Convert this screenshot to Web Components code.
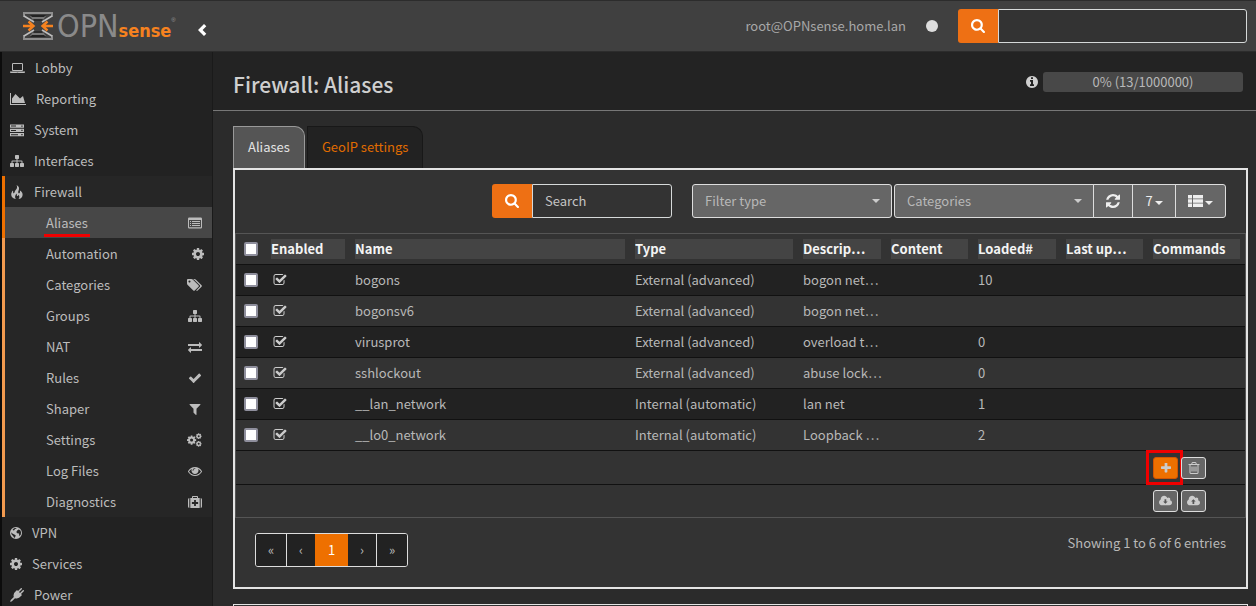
<!DOCTYPE html>
<html lang="en">
<head>
<meta charset="utf-8">
<title>Firewall: Aliases</title>
<style>
html,body{margin:0;height:100%}
body{background:#2b2b2b;color:#b8b8b8;font:13px/20px "Noto Sans CJK SC","Noto Sans",sans-serif;overflow:hidden}
</style>
</head>
<body>
<opn-app></opn-app>
<script>
const COG='<path d="M1152 896q0-106-75-181t-181-75-181 75-75 181 75 181 181 75 181-75 75-181zm512-109v222q0 12-8 23t-20 13l-185 28q-19 54-39 91 35 50 107 138 10 12 10 25t-9 23q-27 37-99 108t-94 71q-12 0-26-9l-138-108q-44 23-91 38-16 136-29 186-7 28-36 28h-222q-14 0-24.5-8.5t-11.5-21.5l-28-184q-49-16-90-37l-141 107q-10 9-25 9-14 0-25-11-126-114-165-168-7-10-7-23 0-12 8-23 15-21 51-66.5t54-70.5q-27-50-41-99l-183-27q-13-2-21-12.5t-8-23.5v-222q0-12 8-23t19-13l186-28q14-46 39-92-40-57-107-138-10-12-10-24 0-10 9-23 26-36 98.5-107.5t94.5-71.5q13 0 26 10l138 107q44-23 91-38 16-136 29-186 7-28 36-28h222q14 0 24.5 8.5t11.5 21.5l28 184q49 16 90 37l142-107q9-9 24-9 13 0 25 10 129 119 165 170 7 8 7 22 0 12-8 23-15 21-51 66.5t-54 70.5q26 50 41 98l183 28q13 2 21 12.5t8 23.5z"/>';
const CLOUD='<path d="M1984 1152q0 159-112.5 271.5t-271.5 112.5h-1088q-185 0-316.5-131.5t-131.5-316.5q0-132 71-241.5t187-163.5q-2-28-2-43 0-212 150-362t362-150q158 0 286.5 88t187.5 230q70-62 166-62 106 0 181 75t75 181q0 75-41 138 129 30 213 134.5t84 239.5z"/>';
/* name: [width, height, viewBox, shapes] */
const ICONS={
laptop:[15,14,'0 0 1920 1792','<path d="M416 1280q-66 0-113-47t-47-113v-704q0-66 47-113t113-47h1088q66 0 113 47t47 113v704q0 66-47 113t-113 47h-1088zm-32-864v704q0 13 9.5 22.5t22.5 9.5h1088q13 0 22.5-9.5t9.5-22.5v-704q0-13-9.5-22.5t-22.5-9.5h-1088q-13 0-22.5 9.5t-9.5 22.5zm1376 928h160v96q0 40-47 68t-113 28h-1600q-66 0-113-28t-47-68v-96h1760zm-720 96q16 0 16-16t-16-16h-160q-16 0-16 16t16 16h160z"/>'],
chart:[16,14,'0 0 2048 1792','<path d="M2048 1536v128h-2048v-1536h128v1408h1920zm-384-1024l256 896h-1664v-576l448-576 576 576z"/>'],
server:[14,14,'0 0 14 14','<path fill-rule="evenodd" d="M0 1.5h14v3.2H0zM0 5.8h14v3.2H0zM0 10.1h14v3.2H0zM1 2.6v1h5v-1zM1 6.9v1h5v-1zM1 11.2v1h7v-1zM11.3 2.5v1.2h1.3V2.5zM11.3 6.8v1.2h1.3V6.8zM11.3 11.1v1.2h1.3v-1.2z"/>'],
sitemap:[14,14,'0 0 1792 1792','<path d="M1792 1248v320q0 40-28 68t-68 28h-320q-40 0-68-28t-28-68v-320q0-40 28-68t68-28h96v-192h-512v192h96q40 0 68 28t28 68v320q0 40-28 68t-68 28h-320q-40 0-68-28t-28-68v-320q0-40 28-68t68-28h96v-192h-512v192h96q40 0 68 28t28 68v320q0 40-28 68t-68 28h-320q-40 0-68-28t-28-68v-320q0-40 28-68t68-28h96v-192q0-52 38-90t90-38h512v-192h-96q-40 0-68-28t-28-68v-320q0-40 28-68t68-28h320q40 0 68 28t28 68v320q0 40-28 68t-68 28h-96v192h512q52 0 90 38t38 90v192h96q40 0 68 28t28 68z"/>'],
fire:[14,14,'0 0 14 14','<path d="M6.6 0C9.2 1.4 9.6 3.6 8.6 5.6C8 6.8 8 8 8.9 8.4C9.9 8.5 10.2 7.2 9.9 5.6C12.4 7 13.4 9.6 12 12C11.2 13.3 10 13.8 8.6 14C9.8 12.6 9.6 11 8.4 9.8C8.2 11 7.6 11.2 7.2 11C6.6 10.6 6.8 9.4 7 8.6C5.2 9.8 4.4 12 5.8 14C3 13.6 1.2 12 1.2 9.6C1.2 8 2 7 2.6 5.6C3.4 6.4 3.2 7.4 3.1 8.2C3.6 8.6 4.4 8.2 4.6 7.2C4.8 5.6 6.6 4.6 7 3C7.2 2 7 .9 6.6 0Z"/>'],
listalt:[14,14,'0 0 14 14','<path fill-rule="evenodd" d="M1.3 1.5h11.4q1.3 0 1.3 1.2v8.6q0 1.2-1.3 1.2H1.3Q0 12.5 0 11.3V2.7Q0 1.500 1.300 1.500zM1 4v7.300h12V4zM2 5h1v1H2zM4 5h8v1H4zM2 7h1v1H2zM4 7h8v1H4zM2 9h1v1H2zM4 9h8v1H4z"/>'],
cog:[12,14,'128 0 1536 1792',COG],
tags:[15,14,'0 0 1920 1792','<path d="M448 448q0-53-37.5-90.5t-90.5-37.5-90.5 37.5-37.5 90.5 37.500 90.500 90.500 37.500 90.500-37.500 37.500-90.500zm1067 576q0 53-37 90l-491 492q-39 37-91 37-53 0-90-37l-715-716q-38-37-64.500-101t-26.500-117v-416q0-52 38-90t90-38h416q53 0 117 26.500t102 64.500l715 714q37 39 37 91zm384 0q0 53-37 90l-491 492q-39 37-91 37-36 0-59-14t-53-45l470-470q37-37 37-90 0-52-37-91l-715-714q-38-38-102-64.500t-117-26.500h224q53 0 117 26.500t102 64.500l715 714q37 39 37 91z"/>'],
exchange:[14,14,'0 0 1792 1792','<path d="M1792 1184v192q0 13-9.500 22.500t-22.500 9.500h-1376v192q0 13-9.500 22.500t-22.500 9.500q-12 0-24-10l-319-320q-9-9-9-22 0-14 9-23l320-320q9-9 23-9 13 0 22.500 9.500t9.500 22.500v192h1376q13 0 22.500 9.500t9.500 22.500zm0-544q0 14-9 23l-320 320q-9 9-23 9-13 0-22.500-9.500t-9.500-22.500v-192h-1376q-13 0-22.500-9.500t-9.500-22.500v-192q0-13 9.500-22.500t22.500-9.500h1376v-192q0-14 9-23t23-9q12 0 24 10l319 319q9 9 9 23z"/>'],
check:[14,14,'0 0 1792 1792','<path d="M1671 566q0 40-28 68l-724 724-136 136q-28 28-68 28t-68-28l-136-136-362-362q-28-28-28-68t28-68l136-136q28-28 68-28t68 28l294 295 656-657q28-28 68-28t68 28l136 136q28 28 28 68z"/>'],
filter:[14,14,'0 0 1792 1792','<path d="M1595 295q17 41-14 70l-493 493v742q0 42-39 59-13 5-25 5-27 0-45-19l-256-256q-19-19-19-45v-486l-493-493q-31-29-14-70 17-39 59-39h1280q42 0 59 39z"/>'],
cogs:[15,14,'0 0 15 14','<g transform="translate(-.8 1.700) scale(.006)">'+COG+'</g><g transform="translate(8.300 -.2) scale(.0038)">'+COG+'</g><g transform="translate(8.300 7.400) scale(.0038)">'+COG+'</g>'],
eye:[14,14,'0 0 1792 1792','<path d="M1664 960q-152-236-381-353 61 104 61 225 0 185-131.500 316.500t-316.500 131.500-316.500-131.500-131.500-316.500q0-121 61-225-229 117-381 353 133 205 333.500 326.500t434.500 121.500 434.500-121.500 333.500-326.500zm-720-384q0-20-14-34t-34-14q-125 0-214.500 89.500t-89.500 214.500q0 20 14 34t34 14 34-14 14-34q0-86 61-147t147-61q20 0 34-14t14-34zm848 384q0 34-20 69-140 230-376.500 368.500t-499.500 138.500-499.500-139-376.500-368q-20-35-20-69t20-69q140-229 376.500-368t499.500-139 499.500 139 376.500 368q20 35 20 69z"/>'],
medkit:[14,14,'0 0 14 14','<path fill-rule="evenodd" d="M0 4.500q0-1.300 1.300-1.500v10Q0 12.800 0 11.500zM14 4.500q0-1.300-1.300-1.500v10q1.300-.2 1.300-1.500zM2.300 3H4V1.800Q4 1 4.800 1h4.400q.8 0 .8.800V3h1.700v10H2.300zM5 3h4V2H5zM6.100 4.900v2.200H3.900v1.800h2.200v2.200h1.800V8.900h2.200V7.100H7.900V4.900z"/>'],
globe:[12,14,'0 0 12 14','<path fill-rule="evenodd" d="M6 1a6 6 0 1 1 0 12A6 6 0 0 1 6 1zM2.500 4L4 4.500L5 3L6.600 2.700L6 1.900L4 2.300zM7.200 4.400L6.300 6L7.200 7.300L9 7.400L9.300 10.200L10.800 8.500L11 6L10.200 4.200L8.600 3.500zM1.200 6.200L1.500 8.300L3.300 10.300L4.300 12L5.200 11L5.700 9.200L3.800 8.200L2.400 7.600z"/>'],
plug:[14,14,'0 0 14 14','<path d="M13.800 2.200q.4.500 0 1L11 6l1 1-1 1q-2.400 3.300-6 2.200L2.200 13q-.5.500-1.200.6L0 14l.4-1q.1-.7.600-1.200L3.800 9Q2.700 5.500 6 3l1-1 1 1L10.800.2q.5-.4 1 0t0 1L9 4l1 1 2.800-2.800q.5-.4 1 0z"/>'],
search:[14,14,'64 128 1664 1664','<path d="M1216 832q0-185-131.500-316.500t-316.500-131.500-316.500 131.500-131.500 316.500 131.500 316.500 316.500 131.500 316.500-131.500 131.500-316.500zm512 832q0 52-38 90t-90 38q-54 0-90-38l-343-342q-179 124-399 124-143 0-273.500-55.500t-225-150-150-225-55.500-273.500 55.500-273.500 150-225 225-150 273.500-55.500 273.500 55.500 225 150 150 225 55.500 273.500q0 220-124 399l343 343q37 37 37 90z"/>'],
info:[12,14,'128 0 1536 1792','<path d="M1152 1376v-160q0-14-9-23t-23-9h-96v-512q0-14-9-23t-23-9h-320q-14 0-23 9t-9 23v160q0 14 9 23t23 9h96v320h-96q-14 0-23 9t-9 23v160q0 14 9 23t23 9h448q14 0 23-9t9-23zm-128-896v-160q0-14-9-23t-23-9h-192q-14 0-23 9t-9 23v160q0 14 9 23t23 9h192q14 0 23-9t9-23zm640 416q0 209-103 385.500t-279.500 279.500-385.500 103-385.500-103-279.500-279.500-103-385.500 103-385.500 279.500-279.500 385.500-103 385.500 103 279.500 279.500 103 385.500z"/>'],
checkbox:[14,14,'0 0 1792 1792','<path d="M1472 930v318q0 119-84.500 203.500t-203.500 84.500h-832q-119 0-203.500-84.500t-84.500-203.500v-832q0-119 84.500-203.500t203.500-84.500h832q63 0 117 25 15 7 18 23 3 17-9 29l-49 49q-10 10-23 10-3 0-9-2-23-6-45-6h-832q-66 0-113 47t-47 113v832q0 66 47 113t113 47h832q66 0 113-47t47-113v-254q0-13 9-22l64-64q10-10 23-10 6 0 12 3 20 8 20 29zm231-489l-814 814q-24 24-57 24t-57-24l-430-430q-24-24-24-57t24-57l110-110q24-24 57-24t57 24l263 263 647-647q24-24 57-24t57 24l110 110q24 24 24 57t-24 57z"/>'],
refresh:[14,14,'128 128 1536 1536','<path d="M1639 1056q0 5-1 7-64 268-268 434.500t-478 166.500q-146 0-282.500-55t-243.500-157l-129 129q-19 19-45 19t-45-19-19-45v-448q0-26 19-45t45-19h448q26 0 45 19t19 45-19 45l-137 137q71 66 161 102t187 36q134 0 250-65t186-179q11-17 53-117 8-23 30-23h192q13 0 22.500 9.500t9.500 22.500zm25-800v448q0 26-19 45t-45 19h-448q-26 0-45-19t-19-45 19-45l138-138q-148-137-349-137-134 0-250 65t-186 179q-11 17-53 117-8 23-30 23h-199q-13 0-22.500-9.500t-9.500-22.500v-7q65-268 270-434.500t480-166.500q146 0 284 55.500t245 156.500l130-129q19-19 45-19t45 19 19 45z"/>'],
list:[15,14,'0 0 15 14','<path d="M0 1h4v3.400H0zM5 1h10v3.400H5zM0 5.300h4v3.400H0zM5 5.300h10v3.400H5zM0 9.600h4V13H0zM5 9.600h10V13H5z"/>'],
caret:[8,4,'0 0 8 4','<path d="M0 0h8L4 4z"/>'],
plus:[10,10,'192 192 1408 1408','<path d="M1600 736v192q0 40-28 68t-68 28h-416v416q0 40-28 68t-68 28h-192q-40 0-68-28t-28-68v-416h-416q-40 0-68-28t-28-68v-192q0-40 28-68t68-28h416v-416q0-40 28-68t68-28h192q40 0 68 28t28 68v416h416q40 0 68 28t28 68z"/>'],
trash:[12,12,'128 128 1536 1536','<path d="M704 736v576q0 14-9 23t-23 9h-64q-14 0-23-9t-9-23v-576q0-14 9-23t23-9h64q14 0 23 9t9 23zm256 0v576q0 14-9 23t-23 9h-64q-14 0-23-9t-9-23v-576q0-14 9-23t23-9h64q14 0 23 9t9 23zm256 0v576q0 14-9 23t-23 9h-64q-14 0-23-9t-9-23v-576q0-14 9-23t23-9h64q14 0 23 9t9 23zm128 724v-948h-896v948q0 22 7 40.500t14.500 27 10.500 8.500h832q3 0 10.500-8.500t14.500-27 7-40.500zm-672-1076h448l-48-117q-7-9-17-11h-317q-10 2-17 11zm928 32v64q0 14-9 23t-23 9h-96v948q0 83-47 143.500t-113 60.500h-832q-66 0-113-58.500t-47-141.500v-952h-96q-14 0-23-9t-9-23v-64q0-14 9-23t23-9h309l70-167q15-37 54-63t79-26h320q40 0 79 26t54 63l70 167h309q14 0 23 9t9 23z"/>'],
clouddown:[13,12,'64 128 1920 1536',CLOUD+'<path fill="#555" d="M880 620h256v340h210l-338 350-338-350h210z"/>'],
cloudup:[13,12,'64 128 1920 1536',CLOUD+'<path fill="#555" d="M880 1330h256V980h210L1008 620 670 980h210z"/>'],
left:[9,12,'0 0 9 12','<path d="M6 0L8.300 2.200L4.600 6L8.300 9.800L6 12L0 6z"/>'],
logo:[30,30,'0 0 30 30','<path fill="#777" d="M7 5h16l-3 4H10zM10 21h10l3 4H7z"/><path fill="#222" d="M7 4h16l-2 2H9zM9 24h12l2 2H7z"/><path fill="#2c2c2c" d="M10 8h10l-1 2h-8zM11 20h8l1 2H10z"/><g fill="none" stroke="#8e8e8e" stroke-width="2"><path d="M1 6V2h28v4M1 24v4h28v-4"/></g><path fill="none" stroke="#bdbdbd" stroke-width="1.600" d="M1 5l10 6M29 5l-10 6M1 25l10-6M29 25l-10-6"/><path fill="none" stroke="#f6821f" stroke-width="2.400" d="M0 15h10M5.500 10.500L10.500 15l-5 4.500M30 15H20M24.500 10.500L19.500 15l5 4.500"/>'],
none:[0,0,'0 0 1 1','']
};

function define(name,css,html,after){
  const t=document.createElement('template');
  t.innerHTML='<style>*,*::before{box-sizing:border-box}'+css+'</style>'+html;
  customElements.define(name,class extends HTMLElement{
    constructor(){super();this.attachShadow({mode:'open'})}
    connectedCallback(){
      if(this.shadowRoot.childNodes.length)return;
      this.shadowRoot.append(t.content.cloneNode(true));
      if(after)after(this,this.shadowRoot);
    }
  });
}

define('opn-icon',':host{display:inline-flex;flex:none}svg{display:block;fill:currentColor}','',(el,root)=>{
  const [w,h,box,body]=ICONS[el.getAttribute('name')];
  root.innerHTML+=`<svg width="${w}" height="${h}" viewBox="${box}" aria-hidden="true">${body}</svg>`;
});

define('opn-search',`
:host{display:flex;height:34px}
button{flex:none;width:40px;border:0;padding:0;background:#ee7014;color:#fff;border-radius:3px 0 0 3px;display:flex;align-items:center;justify-content:center}
input{flex:1;min-width:0;background:#333;border:1px solid #d6d9d9;border-radius:0 3px 3px 0;padding:0 12px;color:#ddd;font:inherit;outline:0}
input::placeholder{color:#c4c4c4;opacity:1}`,
'<button type="button" aria-label="Search"><opn-icon name="search"></opn-icon></button><input type="text" aria-label="Search">',
(el,root)=>{root.querySelector('input').placeholder=el.getAttribute('hint')||''});

define('opn-logo',`
:host{display:block;width:151px}
a{display:flex;align-items:center;text-decoration:none}
.opn{margin-left:4px;font:32px/34px "DejaVu Sans Condensed",sans-serif;color:#8a8a8a}
.sense{align-self:flex-end;font:bold 18px/24px "DejaVu Sans Condensed",sans-serif;color:#f6821f}
sup{align-self:flex-start;margin-top:8px;font:6px/6px "Liberation Sans",sans-serif;color:#999}`,
'<a href="#"><opn-icon name="logo"></opn-icon><span class="opn">OPN</span><span class="sense">sense</span><sup>®</sup></a>');

define('opn-header',`
:host{display:flex;align-items:center;height:52px;padding:0 9px 0 23px;background:#404040;border-top:1px solid #2c2c2c;border-bottom:1px solid #2c2c2c}
.toggle{margin-left:24px;padding:0;border:0;background:none;color:#fff;display:flex;margin-top:8px}
.user{margin-left:auto;color:#a8a8a8}
.dot{width:12px;height:12px;border-radius:50%;background:#ddd;margin:0 20px}
opn-search{width:289px}`,
'<opn-logo></opn-logo><button class="toggle" type="button" aria-label="Collapse menu"><opn-icon name="left"></opn-icon></button><span class="user">root@OPNsense.home.lan</span><span class="dot"></span><opn-search></opn-search>');

define('opn-nav-item',`
:host{display:block}
a{display:flex;align-items:center;gap:10px;height:31px;padding-left:5px;border-left:3px solid transparent;color:inherit;text-decoration:none}
:host([open]) a{background:#262626;border-color:#ee7000}
:host([sub]) a{flex-direction:row-reverse;justify-content:space-between;padding:0 10px 0 41px;background:#262626;border-color:#f29a4f}
:host([sub][icon=cog]) a{padding-right:8px}
:host([sub][current]) a{height:32px;margin-bottom:-1px;background:#474747;border-color:#ee7000}
span{position:relative}
:host([current]) span::after{content:"";position:absolute;left:-2px;right:-2px;bottom:-4px;height:3px;background:#f00000}`,
'<a href="#"><opn-icon name="none"></opn-icon><span><slot></slot></span></a>',
(el,root)=>{
  const i=document.createElement('opn-icon');i.setAttribute('name',el.getAttribute('icon'));
  root.querySelector('opn-icon').replaceWith(i);
});

const NAV=[['Lobby','laptop'],['Reporting','chart'],['System','server'],['Interfaces','sitemap'],['Firewall','fire','open'],
['Aliases','listalt','sub current'],['Automation','cog','sub'],['Categories','tags','sub'],['Groups','sitemap','sub'],['NAT','exchange','sub'],['Rules','check','sub'],['Shaper','filter','sub'],['Settings','cogs','sub'],['Log Files','eye','sub'],['Diagnostics','medkit','sub'],
['VPN','globe'],['Services','cog'],['Power','plug']];
define('opn-sidebar',`
:host{display:block;background:#222;border-left:2px solid #0c0c0c;border-right:1px solid #1a1a1a;color:#bcbcbc}`,
'<nav>'+NAV.map(([t,i,f=''])=>`<opn-nav-item icon="${i}" ${f}>${t}</opn-nav-item>`).join('')+'</nav>');

define('opn-page-head',`
:host{display:flex;align-items:center;height:59px;padding:2px 13px 0 20px;background:#232323;border-bottom:1px solid #777}
h1{margin:3px auto 0 0;font-size:21px;line-height:28px;font-weight:500;color:#cfcfcf}
opn-icon{color:#d0d0d0;margin-right:5px}
.meter{width:200px;height:20px;border-radius:3px;background:#484848;text-align:center}`,
'<h1>Firewall: Aliases</h1><opn-icon name="info"></opn-icon><div class="meter">0% (13/1000000)</div>');

define('opn-tabs',`
:host{display:flex;gap:2px}
a{height:42px;padding:0 14px;border:1px solid #181818;border-bottom:0;border-radius:0 10px 0 0;background:#222;color:#e06c00;line-height:40px;text-decoration:none}
a[aria-current]{background:#555;border-color:#999;color:#e4e4e4}`,
'<a href="#" aria-current="page">Aliases</a><a href="#">GeoIP settings</a>');

define('opn-toolbar',`
:host{display:flex;justify-content:flex-end;padding:14px 20px 15px 0}
opn-search{width:180px;margin-right:20px}
.pick{position:relative;width:200px;margin-right:2px}
select{appearance:none;width:100%;height:34px;padding:0 12px;background:#666;border:1px solid #ddd;border-radius:3px;color:#b8b8b8;font:inherit}
.pick opn-icon{position:absolute;right:12px;top:15px;color:#ccc}
.pick:last-of-type{margin-right:-1px}
.pick:last-of-type select{border-radius:3px 0 0 3px}
button{height:34px;margin-right:-1px;padding:0;border:1px solid #ddd;background:#666;color:#eee;font:inherit;display:flex;gap:2px;align-items:center;justify-content:center}
button:last-child{border-radius:0 3px 3px 0;margin:0}
button opn-icon[name=caret]{margin-top:3px}
.r{width:40px}.n{width:44px}.l{width:51px}`,
`<opn-search hint="Search"></opn-search>
<div class="pick"><select aria-label="Filter type"><option>Filter type</option></select><opn-icon name="caret"></opn-icon></div>
<div class="pick"><select aria-label="Categories"><option>Categories</option></select><opn-icon name="caret"></opn-icon></div>
<button class="r" type="button" aria-label="Refresh"><opn-icon name="refresh"></opn-icon></button>
<button class="n" type="button">7<opn-icon name="caret"></opn-icon></button>
<button class="l" type="button" aria-label="Columns"><opn-icon name="list"></opn-icon><opn-icon name="caret"></opn-icon></button>`);

const ROWS=[['bogons','External (advanced)','bogon net…','10'],['bogonsv6','External (advanced)','bogon net…',''],['virusprot','External (advanced)','overload t…','0'],['sshlockout','External (advanced)','abuse lock…','0'],['__lan_network','Internal (automatic)','lan net','1'],['__lo0_network','Internal (automatic)','Loopback …','2']];
const box=l=>`<td class="c"><input type="checkbox" aria-label="${l}"></td>`;
define('opn-alias-grid',`
:host{display:block;border:1px solid #555}
table{width:100%;border-collapse:separate;border-spacing:0;table-layout:fixed}
th,td{height:31px;padding:0 5px;text-align:left;border-bottom:1px solid #111;white-space:nowrap;font-weight:400}
th span{display:block;height:20px;background:#444;color:#f4f4f4;font-weight:700;overflow:hidden}
tbody tr:nth-child(odd){background:#222}
.c{padding:0 8px}
input{display:block;appearance:none;width:14px;height:14px;margin:0;border:2px solid #8f8f9d;border-radius:2px;background:#fff}
td opn-icon{display:flex;margin-left:2px;color:#ccc}
tfoot td{height:34px}
tfoot tr:last-child td{border:0;height:32px}
.acts{display:flex;gap:3px}
button opn-icon{margin:0}
button{position:relative;width:25px;height:22px;padding:0;border:1px solid #ddd;border-radius:3px;background:#666;color:#eee;display:flex;align-items:center;justify-content:center}
.acts opn-icon{margin:0}
.add{background:#ee7000;border-color:#d35400;color:#fff}
.mark{position:absolute;left:-8px;top:-8px;width:37px;height:35px;border:3px solid #f00000}`,
`<table><colgroup><col style="width:30px"><col style="width:84px"><col><col style="width:168px"><col style="width:88px"><col style="width:87px"><col style="width:88px"><col style="width:87px"><col style="width:97px"></colgroup>
<thead><tr><th class="c"><input type="checkbox" aria-label="Select all"></th>${['Enabled','Name','Type','Descrip…','Content','Loaded#','Last up…','Commands'].map(t=>`<th><span>${t}</span></th>`).join('')}</tr></thead>
<tbody>${ROWS.map(r=>`<tr>${box(r[0])}<td><opn-icon name="checkbox"></opn-icon></td><td>${r[0]}</td><td>${r[1]}</td><td>${r[2]}</td><td></td><td>${r[3]}</td><td></td><td></td></tr>`).join('')}</tbody>
<tfoot><tr><td colspan="8"></td><td><div class="acts"><button class="add" type="button" aria-label="Add"><opn-icon name="plus"></opn-icon><span class="mark"></span></button><button type="button" aria-label="Delete"><opn-icon name="trash"></opn-icon></button></div></td></tr>
<tr><td colspan="8"></td><td><div class="acts"><button type="button" aria-label="Download"><opn-icon name="clouddown"></opn-icon></button><button type="button" aria-label="Upload"><opn-icon name="cloudup"></opn-icon></button></div></td></tr></tfoot></table>`);

define('opn-pager',`
:host{display:flex;justify-content:space-between;padding:15px 20px 20px}
nav{display:flex;border:1px solid #ddd;border-radius:3px;height:34px;overflow:hidden}
a{width:28px;background:#222;color:#b8b8b8;line-height:32px;text-align:center;text-decoration:none}
a:first-child{width:31px;border-right:1px solid #ddd}
a:last-child{width:31px;border-left:1px solid #ddd}
a[aria-current]{width:33px;background:#ee7000;color:#fff}`,
'<nav aria-label="Pages"><a href="#">«</a><a href="#">‹</a><a href="#" aria-current="page">1</a><a href="#">›</a><a href="#">»</a></nav><span>Showing 1 to 6 of 6 entries</span>');

define('opn-panel',':host{display:block;background:#333;border:2px solid #e4e4e4}:host([next]){margin-top:15px;height:40px;border-width:1px}','<slot></slot>');

define('opn-app',`
:host{display:grid;grid-template:auto 1fr/213px 1fr;height:100%;overflow:hidden}
opn-header{grid-column:1/-1}
opn-sidebar{min-height:0}
.body{padding:15px 8px 0 20px}
main{min-width:0;min-height:0}`,
`<opn-header></opn-header><opn-sidebar></opn-sidebar>
<main><opn-page-head></opn-page-head><div class="body"><opn-tabs></opn-tabs>
<opn-panel><opn-toolbar></opn-toolbar><opn-alias-grid></opn-alias-grid><opn-pager></opn-pager></opn-panel><opn-panel next></opn-panel></div></main>`);
</script>
</body>
</html>
